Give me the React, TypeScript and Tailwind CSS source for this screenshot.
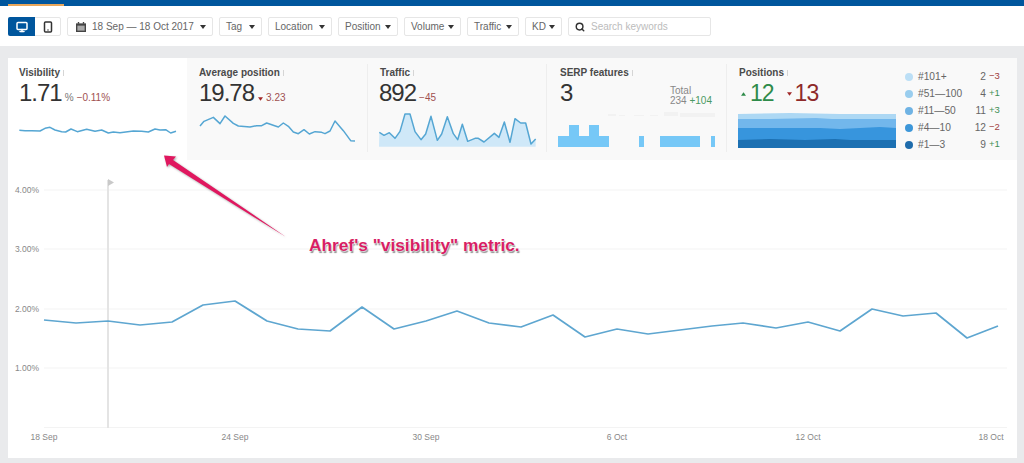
import { Monitor, Smartphone, Search } from "lucide-react";

const chartPoints =
  "44,320 76,323 108,321 140,325 172,322 203,305 235,301 267,321 298,329 330,331 362,307 394,329 426,321 457,311 489,323 521,327 553,315 585,337 617,329 648,334 680,330 712,326 743,323 776,328 808,322 840,331 872,309 903,316 936,313 967,338 998,326";

const visibilityLine =
  "58,394 75,395 95,395 120,396 135,388 150,385 165,393 185,398 197,399 213,390 232,398 260,391 285,397 305,393 325,402 340,399 360,401 400,396 425,397 445,399 465,390 480,393 497,392 512,402 528,397";
const positionLine =
  "600,381 612,367 640,355 660,374 675,351 700,373 715,381 750,384 770,380 785,380 800,372 835,384 850,372 865,382 880,399 895,404 912,392 928,405 945,398 965,400 975,404 990,396 1005,366 1030,395 1052,425 1065,426";
const trafficLine =
  "58,400 72,409 88,401 105,418 120,397 135,345 150,345 165,398 183,422 197,405 213,352 232,424 245,405 262,353 280,404 293,422 307,376 323,427 345,418 355,418 372,429 403,403 417,415 433,369 450,430 465,359 482,372 497,372 513,435 527,420";

const filters = [
  { label: "Tag", width: "w-[43px]" },
  { label: "Location", width: "w-[64px]" },
  { label: "Position", width: "w-[60px]" },
  { label: "Volume", width: "w-[57px]" },
  { label: "Traffic", width: "w-[52px]" },
  { label: "KD", width: "w-[37px]" },
];

const legend = [
  { label: "#101+", value: "2", delta: "−3", dot: "bg-[#bcdff6]", up: false },
  { label: "#51—100", value: "4", delta: "+1", dot: "bg-[#99cdee]", up: true },
  { label: "#11—50", value: "11", delta: "+3", dot: "bg-[#6fb3e4]", up: true },
  { label: "#4—10", value: "12", delta: "−2", dot: "bg-[#3d97d9]", up: false },
  { label: "#1—3", value: "9", delta: "+1", dot: "bg-[#1f6cac]", up: true },
];

const yTicks = [
  { label: "4.00%", y: 190 },
  { label: "3.00%", y: 249 },
  { label: "2.00%", y: 309 },
  { label: "1.00%", y: 368 },
];

const xTicks = [
  { label: "18 Sep", x: 44 },
  { label: "24 Sep", x: 235 },
  { label: "30 Sep", x: 426 },
  { label: "6 Oct", x: 617 },
  { label: "12 Oct", x: 808 },
  { label: "18 Oct", x: 991 },
];

function Caret() {
  return (
    <svg viewBox="0 0 6 4" className="w-[6px] h-[4px] shrink-0">
      <path d="M0 0h6L3 4z" fill="#333" />
    </svg>
  );
}

function Triangle({ up, className }: { up: boolean; className: string }) {
  return (
    <svg viewBox="0 0 6 4" className={`w-[5px] h-[4px] shrink-0 ${className}`}>
      <path d={up ? "M3 0l3 4H0z" : "M0 0h6L3 4z"} />
    </svg>
  );
}

function StatTitle({ children }: { children: string }) {
  return (
    <div className="h-[13px] flex items-center gap-[3px] text-[10px] leading-[13px] font-bold text-[#4a4a4a]">
      {children}
      <span className="w-px h-[6px] bg-[#d5d5d5]" />
    </div>
  );
}

function Spark({ viewX, points, fill }: { viewX: number; points: string; fill?: string }) {
  return (
    <svg viewBox={`${viewX} 336 474 114`} className="block w-[158px] h-[38px] mt-[4px]">
      {fill && <polygon points={fill} fill="#cfe8f8" />}
      <polyline points={points} fill="none" stroke="#55a6d3" strokeWidth="4.5" strokeLinejoin="round" />
    </svg>
  );
}

export default function App() {
  return (
    <div className="relative w-[1024px] h-[463px] overflow-hidden bg-[#e9eaec] font-['Liberation_Sans',Arial,sans-serif] text-[#444]">
      <div className="h-[6px] bg-[#00569d]">
        <div className="ml-[8px] w-[56px] h-[6px] border-b-2 border-[#e8a65a]" />
      </div>

      <div className="h-[40px] bg-white flex items-center pl-[8px] pt-[1px] gap-[6px] text-[10px] text-[#666]">
        <div className="flex h-[19px] w-[53px] rounded-[2px] border border-[#e6e6e6]">
          <div className="w-[27px] -my-px -ml-px rounded-l-[2px] bg-[#00569d] flex items-center justify-center">
            <Monitor className="w-[12px] h-[12px] text-white" strokeWidth={3} />
          </div>
          <div className="flex-1 flex items-center justify-center">
            <Smartphone className="w-[12px] h-[12px] text-[#333]" strokeWidth={3} />
          </div>
        </div>

        <div className="flex items-center h-[19px] w-[146px] px-[8px] gap-[6px] border border-[#e6e6e6] rounded-[2px]">
          <svg viewBox="0 0 11 11" className="w-[10px] h-[10px] shrink-0">
            <path d="M0 1.5h11V11H0z" fill="#444" />
            <path d="M1.5 4h8v5.5h-8z" fill="#aaa" />
            <path d="M2 0h1.5v2H2zM7.5 0H9v2H7.5z" fill="#444" />
          </svg>
          <span className="whitespace-nowrap">18 Sep — 18 Oct 2017</span>
          <Caret />
        </div>

        {filters.map((f) => (
          <div
            key={f.label}
            className={`flex items-center justify-between h-[19px] px-[6px] border border-[#e6e6e6] rounded-[2px] ${f.width}`}
          >
            <span>{f.label}</span>
            <Caret />
          </div>
        ))}

        <div className="flex items-center h-[19px] w-[143px] px-[6px] gap-[6px] border border-[#e6e6e6] rounded-[2px]">
          <Search className="w-[10px] h-[10px] text-[#333]" strokeWidth={3.5} />
          <span className="text-[#bcbcbc]">Search keywords</span>
        </div>
      </div>

      <div className="px-[8px] pt-[12px]">
        <div className="flex h-[102px] w-[1009px] bg-[#f9f9f9]">
          <div className="w-[179px] bg-white pl-[11px] pt-[8px]">
            <StatTitle>Visibility</StatTitle>
            <div className="h-[28px] flex items-baseline text-[24px] leading-[28px] tracking-[-1px] text-[#333]">
              1.71
              <span className="ml-[3px] text-[10px] tracking-normal text-[#777]">%</span>
              <span className="ml-[3px] text-[10px] tracking-normal text-[#a05050]">−0.11%</span>
            </div>
            <Spark viewX={57} points={visibilityLine} />
          </div>

          <div className="w-[180px] pl-[12px] pt-[8px]">
            <StatTitle>Average position</StatTitle>
            <div className="h-[28px] flex items-baseline text-[24px] leading-[28px] tracking-[-1px] text-[#333]">
              19.78
              <Triangle up={false} className="ml-[4px] fill-[#a02828]" />
              <span className="ml-[3px] text-[10px] tracking-normal text-[#a05050]">3.23</span>
            </div>
            <Spark viewX={597} points={positionLine} />
          </div>

          <div className="w-[179px] pl-[12px] pt-[8px] relative">
            <div className="absolute left-0 top-[6px] bottom-[8px] w-px bg-[#eeeeee]" />
            <div className="pl-px">
              <StatTitle>Traffic</StatTitle>
            </div>
            <div className="h-[28px] flex items-baseline text-[24px] leading-[28px] tracking-[-1px] text-[#333]">
              892
              <span className="ml-[3px] text-[10px] tracking-normal text-[#a05050]">−45</span>
            </div>
            <Spark
              viewX={57}
              points={trafficLine}
              fill={`57,443 ${trafficLine} 527,443`}
            />
          </div>

          <div className="w-[180px] pl-[14px] pt-[8px] relative">
            <div className="absolute left-0 top-[6px] bottom-[8px] w-px bg-[#eeeeee]" />
            <StatTitle>SERP features</StatTitle>
            <div className="h-[28px] flex text-[24px] leading-[28px] tracking-[-1px] text-[#333]">
              <span className="w-[110px]">3</span>
              <div className="pt-[7px] text-[10px] leading-[10px] tracking-normal text-[#888]">
                <div>Total</div>
                <div>
                  234 <span className="text-[#4c9a63]">+104</span>
                </div>
              </div>
            </div>
            <svg viewBox="558 112 160 38" className="block w-[160px] h-[38px] mt-[4px] -ml-[2px]">
              <path
                d="M608 115h8v2h-8zM619 116h6v1h-6zM634 116h10v1h-10zM650 116h8v1h-8zM664 113h14v4h-14zM680 114h35v4h-35z"
                fill="#f2f2f2"
              />
              <path
                d="M558 137h11v-11h10v11h10v-11h10v11h10v11h-51zM639 137h5v11h-5zM660 137h40v11h-40zM711 137h4v11h-4z"
                fill="#76c8f7"
              />
            </svg>
          </div>

          <div className="flex-1 flex pl-[13px] pt-[8px] relative">
            <div className="absolute left-0 top-[6px] bottom-[8px] w-px bg-[#eeeeee]" />
            <div className="w-[166px]">
              <StatTitle>Positions</StatTitle>
              <div className="h-[28px] flex items-center text-[23px] leading-[28px] tracking-[-1px]">
                <Triangle up className="ml-[2px] mt-[2px] fill-[#2e8b4a]" />
                <span className="ml-[4px] text-[#2e8b4a]">12</span>
                <Triangle up={false} className="ml-[13px] mt-[1px] fill-[#a02828]" />
                <span className="ml-[3px] text-[#8e2a2a]">13</span>
              </div>
              <svg viewBox="738 112 160 38" className="block w-[160px] h-[38px] mt-[4px] -ml-px">
                <path d="M738 115L790 114L840 115L896 115V149H738z" fill="#add8f4" />
                <path d="M738 120L770 120L816 119L832 120L896 120V149H738z" fill="#72b7ec" />
                <path d="M738 129L790 129L820 129L840 130L880 128L896 129V149H738z" fill="#3795dd" />
                <path d="M738 141L770 140L805 141L835 140L850 141L896 141V149H738z" fill="#1c70b2" />
              </svg>
            </div>
            <div className="pt-[2px]">
              {legend.map((row) => (
                <div key={row.label} className="h-[17px] flex items-center text-[10.2px] text-[#666]">
                  <span className={`w-[8px] h-[8px] rounded-full ${row.dot}`} />
                  <span className="ml-[5px] w-[56px]">{row.label}</span>
                  <span className="w-[12px] text-right">{row.value}</span>
                  <span
                    className={`ml-[3px] w-[12px] text-[9.5px] ${
                      row.up ? "text-[#3f8f55]" : "text-[#a04040]"
                    }`}
                  >
                    {row.delta}
                  </span>
                </div>
              ))}
            </div>
          </div>
        </div>

        <div className="w-[1009px] h-[298px] bg-white">
          <svg viewBox="8 160 1009 298" className="block w-[1009px] h-[298px]">
            {yTicks.map((t) => (
              <g key={t.label}>
                <line x1="44" x2="1007" y1={t.y} y2={t.y} stroke="#f3f3f3" />
                <text x="39" y={t.y + 3} textAnchor="end" className="text-[8.5px] fill-[#888]">
                  {t.label}
                </text>
              </g>
            ))}
            <line x1="44" x2="1007" y1="427.5" y2="427.5" stroke="#f3f3f3" />
            <rect x="107" y="180" width="2" height="248" fill="#e4e4e4" />
            <path d="M108 179l6 3.5-6 3.5z" fill="#c9c9c9" />
            <polyline
              points={chartPoints}
              fill="none"
              stroke="#5ea6d0"
              strokeWidth="1.7"
              strokeLinejoin="round"
            />
            {xTicks.map((t) => (
              <text key={t.label} x={t.x} y="440" textAnchor="middle" className="text-[8.5px] fill-[#888]">
                {t.label}
              </text>
            ))}
          </svg>
        </div>
      </div>

      {/* annotation over the stats and chart */}
      <svg viewBox="150 145 150 100" className="absolute left-[150px] top-[145px] w-[150px] h-[100px] drop-shadow-[1px_1px_1px_rgba(0,0,0,0.35)]">
        <polygon points="164,155.5 176,156.5 173,160 286,237 169,164 167,167" fill="#e0175f" />
      </svg>
      <div className="absolute left-[309px] top-[235px] text-[17.3px] leading-[20px] font-bold whitespace-nowrap text-[#d81e64] [text-shadow:0_0_2px_#fff,0_0_2px_#fff,1px_2px_1px_#888]">
        Ahref's "visibility" metric.
      </div>
    </div>
  );
}
